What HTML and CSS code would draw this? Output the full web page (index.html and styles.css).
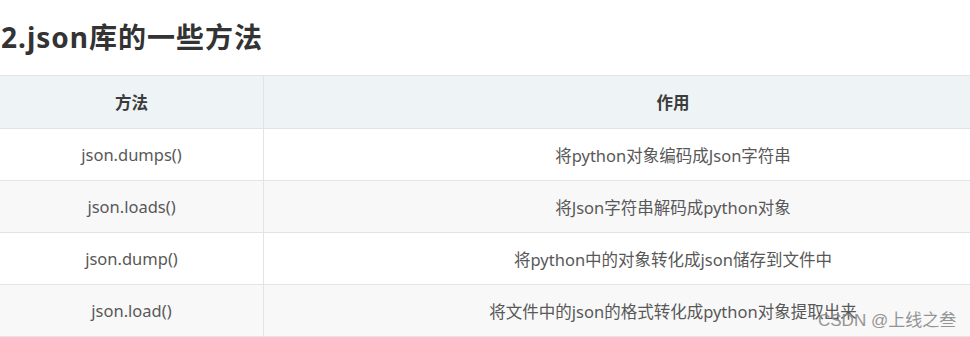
FILE: index.html
```html
<!DOCTYPE html>
<html lang="zh-CN">
<head>
<meta charset="utf-8">
<link rel="stylesheet" href="styles.css">
</head>
<body>
<div class="page">
  <h2 class="title">2.json库的一些方法</h2>
  <table class="methods">
    <thead>
      <tr><th class="col-method">方法</th><th>作用</th></tr>
    </thead>
    <tbody>
      <tr><td>json.dumps()</td><td>将python对象编码成Json字符串</td></tr>
      <tr><td>json.loads()</td><td>将Json字符串解码成python对象</td></tr>
      <tr><td>json.dump()</td><td>将python中的对象转化成json储存到文件中</td></tr>
      <tr><td>json.load()</td><td>将文件中的json的格式转化成python对象提取出来</td></tr>
    </tbody>
  </table>
  <div class="watermark">CSDN @上线之叁</div>
</div>
</body>
</html>
```
FILE: styles.css
```css
html, body {
  margin: 0;
  padding: 0;
  background: #ffffff;
  overflow: hidden;
}
.page {
  position: relative;
  width: 970px;
  height: 337px;
  overflow: hidden;
  font-family: "Noto Sans", "Noto Sans CJK SC", sans-serif;
}
.title {
  margin: 0;
  padding: 19px 0 0 1px;
  height: 36px;
  line-height: 36px;
  font-size: 28px;
  font-weight: 700;
  color: #333333;
  letter-spacing: 1px;
}
.methods {
  margin-top: 20px;
  margin-left: -1px;
  width: 1084px;
  border-collapse: collapse;
  table-layout: fixed;
}
.methods th,
.methods td {
  border: 1px solid #e1e3e4;
  text-align: center;
  height: 51px;
  padding: 0;
  font-size: 16.5px;
}
.methods th {
  background: #eef3f5;
  color: #3b3b3b;
  font-weight: 700;
  height: 52px;
}
.methods td {
  color: #585858;
}
.col-method {
  width: 263px;
}
.methods tbody tr:nth-child(even) td {
  background: #f8f8f8;
}
.methods tbody tr:nth-child(odd) td {
  background: #ffffff;
}
.watermark {
  position: absolute;
  left: 818px;
  top: 306px;
  font-size: 17px;
  color: #8a8a8a;
  opacity: 0.9;
  font-family: "Liberation Sans", "Noto Sans CJK SC", sans-serif;
}
```
